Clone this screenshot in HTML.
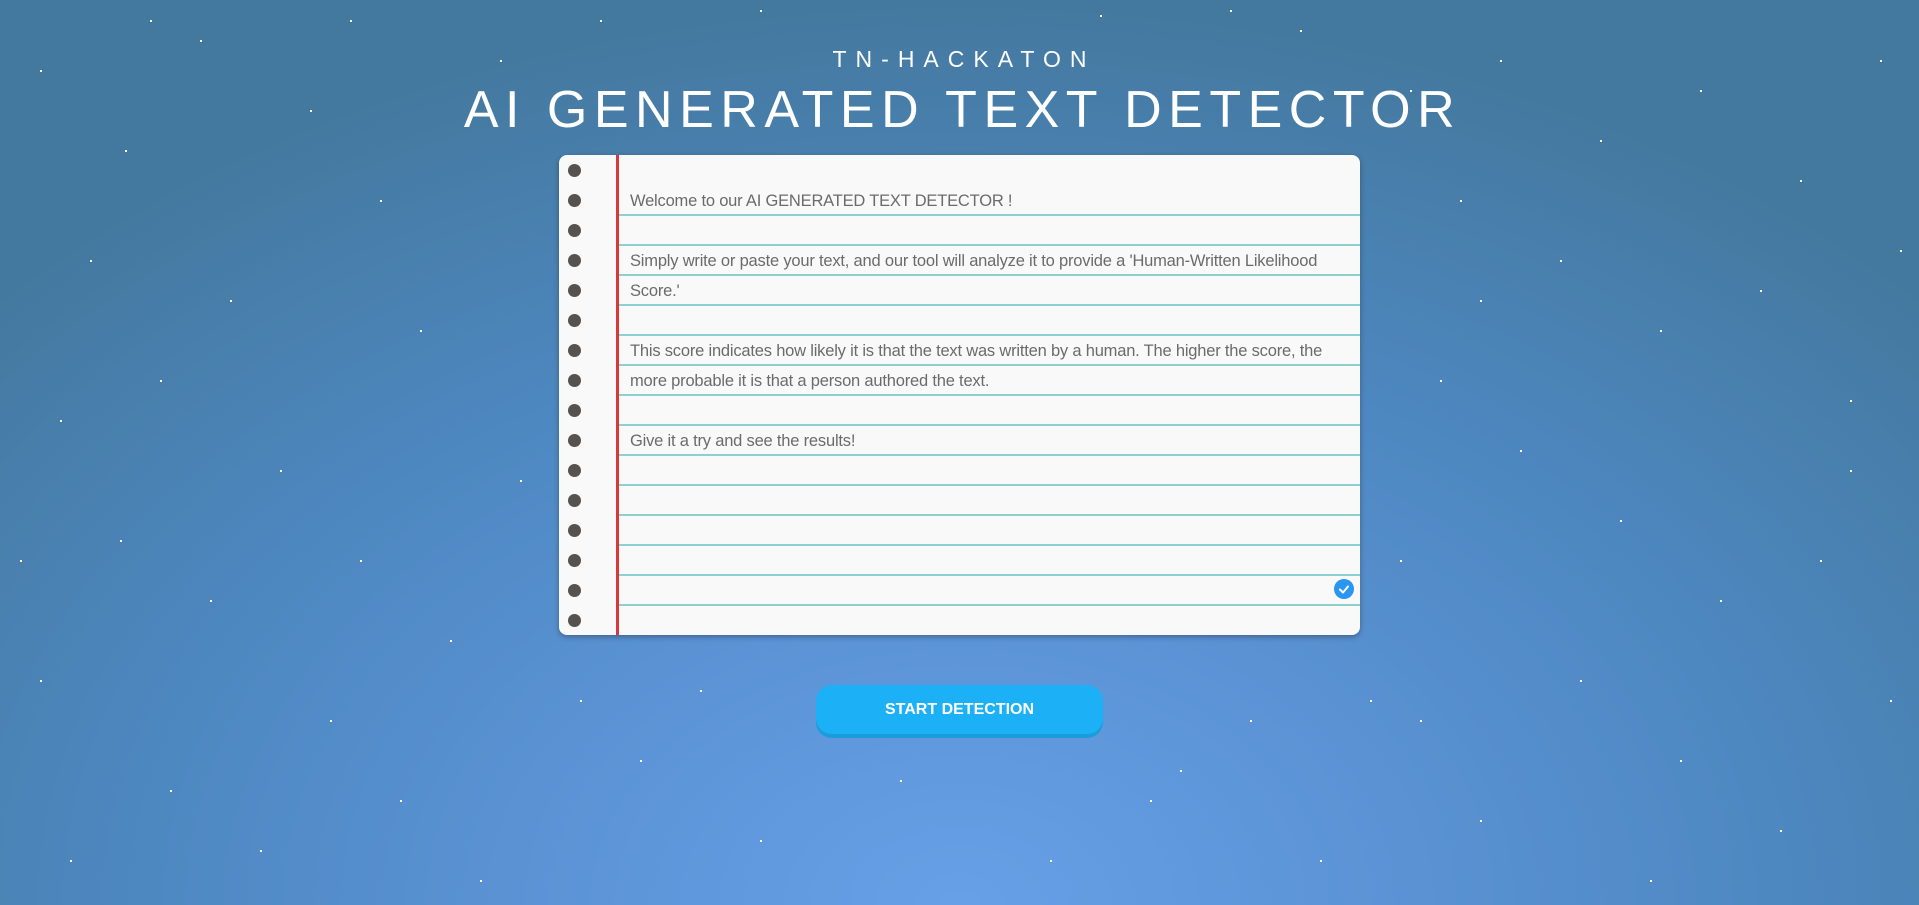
<!DOCTYPE html>
<html><head><meta charset="utf-8"><style>
html,body{margin:0;padding:0;width:1919px;height:905px;overflow:hidden;}
body{background:radial-gradient(ellipse 1300px 900px at 960px 905px,#68a0e8 0%,#5a92d4 35%,#4d87bf 65%,#44799f 100%);font-family:"Liberation Sans",sans-serif;position:relative;}
.stars{position:absolute;left:0;top:0;width:2px;height:2px;background:transparent;
box-shadow:40px 70px #fff,125px 150px #fff,200px 40px #fff,310px 110px #fff,90px 260px #fff,230px 300px #fff,160px 380px #fff,60px 420px #fff,280px 470px #fff,120px 540px #fff,210px 600px #fff,40px 680px #fff,330px 720px #fff,170px 790px #fff,70px 860px #fff,260px 850px #fff,380px 200px #fff,420px 330px #fff,360px 560px #fff,450px 640px #fff,400px 800px #fff,500px 60px #fff,480px 880px #fff,1500px 60px #fff,1600px 140px #fff,1700px 90px #fff,1800px 180px #fff,1880px 60px #fff,1560px 260px #fff,1660px 330px #fff,1760px 290px #fff,1850px 400px #fff,1520px 450px #fff,1620px 520px #fff,1720px 600px #fff,1820px 560px #fff,1890px 700px #fff,1580px 680px #fff,1680px 760px #fff,1780px 830px #fff,1480px 820px #fff,1420px 720px #fff,1440px 380px #fff,1460px 200px #fff,1370px 700px #fff,1250px 720px #fff,1150px 800px #fff,1050px 860px #fff,900px 780px #fff,760px 840px #fff,640px 760px #fff,580px 700px #fff,700px 690px #fff,1180px 770px #fff,1320px 860px #fff,1650px 880px #fff,1410px 90px #fff,1300px 30px #fff,600px 20px #fff,760px 10px #fff,1100px 15px #fff,1230px 10px #fff,20px 560px #fff,520px 480px #fff,1400px 560px #fff,1480px 300px #fff,1900px 250px #fff,1850px 470px #fff,350px 20px #fff,150px 20px #fff;}
.sub{position:absolute;top:46px;left:0;width:1919px;text-align:center;color:#fff;font-size:23px;letter-spacing:9px;text-indent:9px;}
.title{position:absolute;top:80px;left:0;width:1919px;text-align:center;color:#fff;font-size:52px;letter-spacing:6.5px;text-indent:6px;}
.paper{position:absolute;left:559px;top:155px;width:801px;height:480px;background:#f9f9f9;border-radius:8px;box-shadow:0 2px 6px rgba(0,0,0,.3);overflow:hidden;}
.lines{position:absolute;left:59px;right:0;top:31px;height:422px;background:repeating-linear-gradient(to bottom,transparent 0,transparent 28px,#8ecfd2 28px,#8ecfd2 30px);}
.red{position:absolute;left:57px;top:0;width:3px;height:480px;background:#d9363e;}
.hole{position:absolute;left:9px;width:13px;height:13px;border-radius:50%;background:#555250;}
.txt{position:absolute;left:71px;top:31px;width:720px;line-height:30px;font-size:16.5px;color:#6b6b6b;letter-spacing:-0.2px;}
.chk{position:absolute;left:775px;top:424px;width:20px;height:20px;border-radius:50%;background:#2b95f2;}
.btn{position:absolute;left:816px;top:685px;width:287px;height:49px;border-radius:16px;background:#1cb1f6;box-shadow:0 4px 0 #1b9ddb;color:#fff;font-weight:bold;font-size:16px;text-align:center;line-height:50px;}
</style></head><body>
<div class="stars"></div>
<div class="sub">TN-HACKATON</div>
<div class="title">AI GENERATED TEXT DETECTOR</div>
<div class="paper">
<div class="lines"></div>
<div class="red"></div>
<div class="hole" style="top:9px"></div><div class="hole" style="top:39px"></div><div class="hole" style="top:69px"></div><div class="hole" style="top:99px"></div><div class="hole" style="top:129px"></div><div class="hole" style="top:159px"></div><div class="hole" style="top:189px"></div><div class="hole" style="top:219px"></div><div class="hole" style="top:249px"></div><div class="hole" style="top:279px"></div><div class="hole" style="top:309px"></div><div class="hole" style="top:339px"></div><div class="hole" style="top:369px"></div><div class="hole" style="top:399px"></div><div class="hole" style="top:429px"></div><div class="hole" style="top:459px"></div>
<div class="txt">Welcome to our AI GENERATED TEXT DETECTOR !<br>&nbsp;<br>Simply write or paste your text, and our tool will analyze it to provide a 'Human-Written Likelihood<br>Score.'<br>&nbsp;<br>This score indicates how likely it is that the text was written by a human. The higher the score, the<br>more probable it is that a person authored the text.<br>&nbsp;<br>Give it a try and see the results!</div>
<div class="chk"><svg width="20" height="20" viewBox="0 0 20 20"><path d="M6 10.5l3 3 5-6" stroke="#fff" stroke-width="2" fill="none" stroke-linecap="round" stroke-linejoin="round"/></svg></div>
</div>
<div class="btn">START DETECTION</div>
</body></html>
